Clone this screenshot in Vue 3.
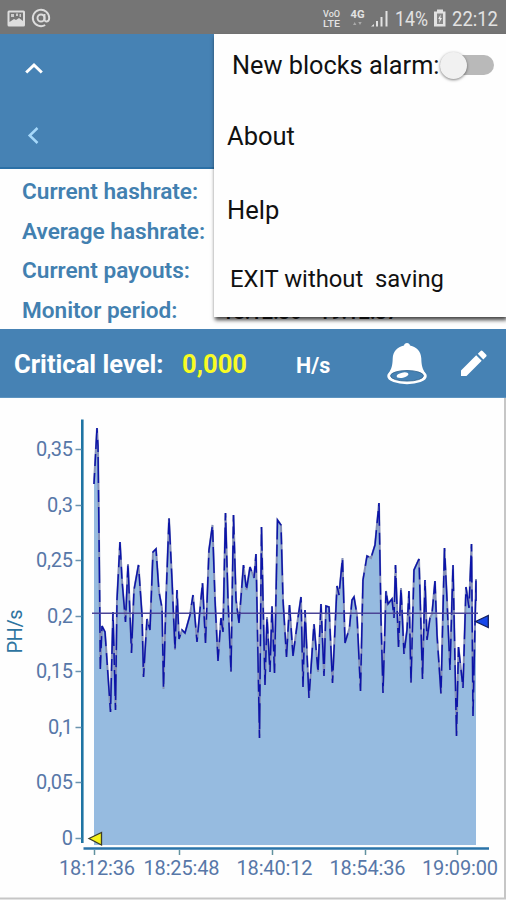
<script setup>
import { ref } from "vue";

const alarm = ref(false);

const stats = [
  { label: "Current hashrate:", value: "" },
  { label: "Average hashrate:", value: "" },
  { label: "Current payouts:", value: "" },
  { label: "Monitor period:", value: "18:12:36 - 19:12:37" },
];

const yTicks = [
  { text: "0,35", y: 51, w: 37 },
  { text: "0,3", y: 107, w: 26 },
  { text: "0,25", y: 162, w: 37 },
  { text: "0,2", y: 218, w: 26 },
  { text: "0,15", y: 273, w: 37 },
  { text: "0,1", y: 329, w: 25 },
  { text: "0,05", y: 384, w: 37 },
  { text: "0", y: 440, w: 10 },
];

const xTicks = [
  { text: "18:12:36", x: 94, label: 97 },
  { text: "18:25:48", x: 179, label: 181.5 },
  { text: "18:40:12", x: 272, label: 274.5 },
  { text: "18:54:36", x: 365, label: 367.5 },
  { text: "19:09:00", x: 457, label: 460 },
];

// x, y pairs; y is measured from the top of the page
const points = [
  [94, 484], [97, 428], [98, 446], [99.5, 580], [100.3, 669], [102, 626], [105, 632],
  [110.5, 712], [113, 612], [115.5, 710], [117, 600], [120, 542], [122, 580],
  [125.5, 622], [128, 564], [131.5, 653], [134, 590], [138.5, 565], [142, 615],
  [143.5, 677], [147, 619], [150, 630], [153, 552], [156, 549], [159, 592],
  [162, 608], [163.5, 689], [166, 600], [169, 518], [172, 580], [175, 650],
  [177, 590], [179, 639], [182, 630], [185, 633], [190, 615], [193, 595],
  [197, 642], [202.5, 583], [205.5, 643], [209, 550], [212.5, 525], [215, 600],
  [218, 661], [221, 618], [223, 632], [225.5, 513], [228, 600], [231, 672],
  [233.5, 515], [236, 600], [239, 623], [243.5, 565], [246.5, 590], [250, 567],
  [254, 578], [256, 554], [259.5, 738], [261.5, 527], [263, 600], [265, 685],
  [267, 617], [270, 672], [272, 606], [274.5, 673], [277.5, 520], [281, 525],
  [283, 600], [286.5, 657], [289.5, 605], [293, 656], [298, 618], [301, 597],
  [303, 687], [305, 610], [309, 698], [314, 624], [318, 672], [321, 604],
  [324, 676], [326, 606], [329, 607], [332.5, 683], [337, 586], [339, 595],
  [342.5, 558], [345, 643], [349.5, 628], [352, 600], [354, 597], [357, 615],
  [360.5, 691], [363, 580], [367, 556], [371, 558], [375, 545], [379, 503],
  [381, 620], [383, 693], [386, 591], [388, 604], [392, 599], [394, 618],
  [395.5, 565], [398.5, 647], [401, 588], [404, 654], [407, 630], [409, 591],
  [411, 683], [414, 570], [419, 559], [422.5, 679], [425, 580], [427, 640],
  [430, 618], [432, 614], [435, 581], [437, 635], [441, 694], [444.5, 548],
  [447, 600], [450, 670], [453, 565], [456.5, 736], [458.5, 647], [463, 688],
  [466, 587], [469, 608], [471.5, 544], [473, 716], [476, 579], [476, 601],
];
const line = points.map(([x, y]) => `${x},${y - 398}`).join(" ");
const area = `94,447 ${line} 476,447`;
</script>

<template>
  <div class="app">
    <div class="status">
      <svg class="status__left" width="60" height="34" viewBox="0 0 60 34">
        <rect x="7.5" y="10.500" width="17.500" height="16" rx="1.500" fill="#ddd" />
        <path d="M9.500 12.500h13.500v8.500l-4-3-3 2-2-1-4.500 3z" fill="#777" />
        <path d="M11 14h3v3h-3zM16 13.500h2v2.500h-2zM19.500 14h1.500v3h-1.500z" fill="#ccc" />
        <g fill="none" stroke="#ddd" stroke-width="1.900">
          <circle cx="41" cy="18" r="3.500" />
          <path d="M44.500 14v5.200c0 3.300 4.700 3.200 4.700-1.200a8.200 8.200 0 1 0-4 7" />
        </g>
      </svg>
      <svg class="status__right" width="190" height="34" viewBox="316 0 190 34">
        <g fill="#e2e2e2">
          <text x="323" y="17" font-size="9.500" font-weight="500" textLength="17" lengthAdjust="spacingAndGlyphs">VoO</text>
          <text x="323" y="26.500" font-size="9.500" font-weight="500" textLength="17" lengthAdjust="spacingAndGlyphs">LTE</text>
          <text x="350.500" y="18" font-size="10" font-weight="700" textLength="14" lengthAdjust="spacingAndGlyphs">4G</text>
          <path d="M353 25l1.700-3 1.700 3zM358.300 22h3.400l-1.700 3z" fill="#aaa" />
          <path d="M371 26.500l3-2.500v2.500zM376 21h2v5.500h-2zM380.500 17h2v9.500h-2zM385.500 11h2v15.500h-2z" />
          <text x="395" y="26" font-size="20.500" textLength="33" lengthAdjust="spacingAndGlyphs">14%</text>
          <path d="M437 9.500h6v2h2.500v15h-11.500v-15h3z" />
          <text x="452" y="26" font-size="20.500" textLength="46" lengthAdjust="spacingAndGlyphs">22:12</text>
        </g>
        <path d="M437 13.500h6v10.500h-6z" fill="#888" />
        <path d="M440.700 14.500l-2.500 4.500h1.500l-.7 4 3-5h-1.600z" fill="#eee" />
      </svg>
    </div>

    <div class="header">
      <svg width="20" height="14" viewBox="0 0 20 14">
        <path d="M2.200 10.500L10 3l7.800 7.500" fill="none" stroke="#fff" stroke-width="3" />
      </svg>
      <svg width="20" height="20" viewBox="0 0 20 20">
        <path d="M13.500 2L5.700 9.500l7.800 7.500" fill="none" stroke="#a6d8fa" stroke-width="2.500" />
      </svg>
    </div>

    <div class="stats">
      <div v-for="row in stats" :key="row.label" class="stats__row">
        <span class="stats__label">{{ row.label }}</span>
        <span class="stats__value">{{ row.value }}</span>
      </div>
    </div>

    <div class="level">
      <span class="level__label">Critical level:</span>
      <span class="level__value">0,000</span>
      <span class="level__unit">H/s</span>
      <svg class="level__bell" width="42" height="46" viewBox="0 0 42 46">
        <path d="M21 2c1.600 0 2.800 1 3 2.500 7 1.500 11 6 11.300 13 .2 7 1 10 4.200 15H2.500c3.200-5 4-8 4.200-15C7 10.500 11 6 18 4.500 18.200 3 19.400 2 21 2z" fill="#fff" />
        <ellipse cx="21" cy="35" rx="18.500" ry="7" fill="#fff" stroke="#fff" stroke-width="2.500" />
        <ellipse cx="21" cy="34.800" rx="16.500" ry="5.300" fill="#4682b4" stroke="#2c5f8c" stroke-width="0.800" />
        <ellipse cx="16.500" cy="34.300" rx="6" ry="2.600" transform="rotate(-12 16 34)" fill="#fff" />
      </svg>
      <svg class="level__pen" width="28" height="28" viewBox="0 0 28 28">
        <path d="M1 21.500L16.200 6.300l5.500 5.500L6.500 27H1zM17.800 4.800l2.600-2.600c.8-.8 1.600-.8 2.400 0l3.200 3.200c.8.800.8 1.600 0 2.400l-2.700 2.600z" fill="#fff" />
      </svg>
    </div>

    <div class="chart">
      <svg width="506" height="502" viewBox="0 0 506 502">
        <polygon :points="area" fill="#96bbe0" />
        <polyline :points="line" class="chart__shade" />
        <polyline :points="line" class="chart__line" />
        <path d="M92 215.300H478" stroke="#4b4496" stroke-width="1.500" />
        <path d="M82.300 21.500V445" stroke="#1f74a3" stroke-width="2.600" />
        <path d="M83.500 450.500H489" stroke="#2a73a8" stroke-width="2.300" />
        <g v-for="t in yTicks" :key="t.text">
          <path :d="`M75.500 ${t.y}.500h6`" stroke="#6a93ae" stroke-width="1.500" />
          <text :x="73" :y="t.y + 6.500" :textLength="t.w" text-anchor="end" class="chart__text">{{ t.text }}</text>
        </g>
        <g v-for="t in xTicks" :key="t.text">
          <path :d="`M${t.x}.500 452v5`" stroke="#62929f" stroke-width="1.500" />
          <text :x="t.label" y="477" textLength="76" text-anchor="middle" class="chart__text">{{ t.text }}</text>
        </g>
        <text transform="translate(22 255.500) rotate(-90)" textLength="44" class="chart__unit">PH/s</text>
        <path d="M89 440.500L101.500 434.500V447z" fill="#f6f31a" stroke="#3d3d25" stroke-width="1.300" />
        <path d="M475.500 223.500L488.300 217.500V229.500z" fill="#1747ea" stroke="#14205c" stroke-width="1.300" />
        <path d="M505 0V500.500H0" fill="none" stroke="#c6c6c6" stroke-width="2" />
      </svg>
    </div>

    <div class="menu">
      <div class="menu__item menu__item--alarm">
        <span class="menu__alarm">New blocks alarm:</span>
        <span class="switch" :class="{ 'switch--on': alarm }" @click="alarm = !alarm">
          <span class="switch__thumb"></span>
        </span>
      </div>
      <div class="menu__item menu__item--about">About</div>
      <div class="menu__item menu__item--help">Help</div>
      <div class="menu__item menu__item--exit">EXIT without&nbsp; saving</div>
    </div>
  </div>
</template>

<style>
body {
  background: #fff;
  overflow: hidden;
}
</style>

<style scoped>
.app {
  position: relative;
  width: 506px;
  height: 900px;
  overflow: hidden;
  background: #fefefe;
  font-family: Roboto, sans-serif;
}
.status {
  display: flex;
  justify-content: space-between;
  height: 34px;
  background: #757575;
}
.header {
  box-sizing: border-box;
  display: flex;
  flex-direction: column;
  gap: 50px;
  height: 135px;
  padding: 28px 0 0 24px;
  background: #4682b4;
  border-bottom: 2px solid #2b70a6;
}
.stats {
  box-sizing: border-box;
  height: 160px;
  padding: 3px 0 0 22px;
}
.stats__row {
  display: flex;
  height: 39.6px;
  align-items: center;
  font-size: 22.6px;
  font-weight: 600;
  color: #4280b0;
  white-space: pre;
}
.stats__label {
  width: 200px;
}
.stats__value {
  padding-top: 2px;
  font-size: 20px;
  color: #222;
}
.level {
  box-sizing: border-box;
  display: flex;
  align-items: center;
  height: 69px;
  padding: 2px 0 0 14px;
  background: #4682b4;
  border-bottom: 1px solid #5d94c0;
  color: #fff;
  font-weight: 700;
  font-size: 25.6px;
}
.level__label {
  width: 168px;
}
.level__value {
  width: 114px;
  color: #f8fb24;
}
.level__unit {
  width: 90px;
  padding-top: 2px;
  font-size: 21.5px;
}
.level__bell {
  margin-bottom: 1px;
}
.level__pen {
  margin: 0 0 2px 32px;
}
.chart {
  height: 502px;
}
.chart svg {
  display: block;
}
.chart__shade {
  fill: none;
  stroke: #8590b8;
  stroke-width: 2;
}
.chart__line {
  fill: none;
  stroke: #0c14a8;
  stroke-width: 1.5;
  stroke-dasharray: 26 7 12 5;
  stroke-dashoffset: 15;
}
.chart__text {
  font-size: 20px;
  fill: #5777a8;
}
.chart__unit {
  font-size: 20px;
  fill: #2d74a0;
}
.menu {
  position: absolute;
  top: 34px;
  left: 214px;
  width: 292px;
  height: 283px;
  background: #fefefe;
  box-shadow: 1px 3px 4px rgba(0, 0, 0, 0.75);
  color: #111;
  font-size: 25.5px;
}
.menu__item {
  display: flex;
  align-items: center;
  padding-left: 13px;
}
.menu__item--alarm {
  height: 62px;
  padding-left: 18px;
}
.menu__alarm {
  width: 208px;
  font-size: 25.3px;
  white-space: nowrap;
}
.menu__item--about {
  height: 80px;
}
.menu__item--help {
  height: 67px;
}
.menu__item--exit {
  height: 71px;
  padding-left: 16px;
  font-size: 23.8px;
}
.switch {
  display: flex;
  align-items: center;
  width: 54px;
  height: 20px;
  border-radius: 10px;
  background: #b9b9b9;
}
.switch--on {
  justify-content: flex-end;
}
.switch__thumb {
  width: 27px;
  height: 27px;
  border-radius: 50%;
  background: #f1f1f1;
  box-shadow: 0 1px 3px rgba(0, 0, 0, 0.5);
}
</style>
